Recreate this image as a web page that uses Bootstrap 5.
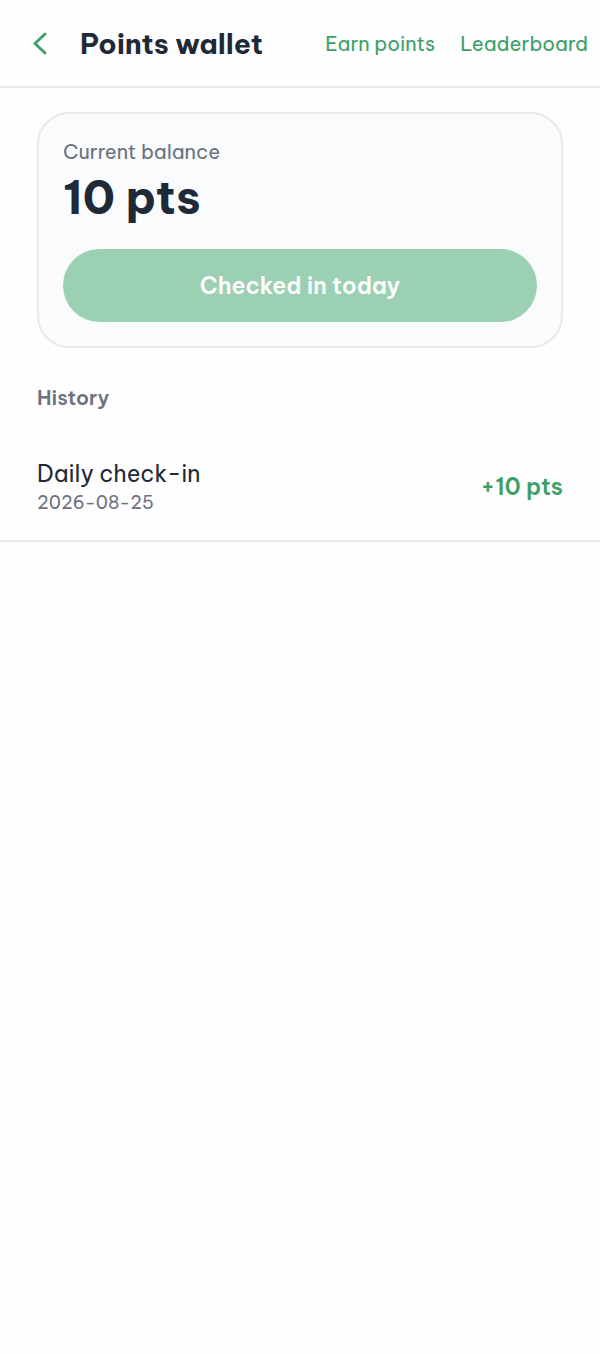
<!DOCTYPE html>
<html lang="en">
<head>
<meta charset="utf-8">
<meta name="viewport" content="width=device-width, initial-scale=1">
<title>Points wallet</title>
<link rel="stylesheet" href="https://cdn.jsdelivr.net/npm/bootstrap@5.3.0/dist/css/bootstrap.min.css">
<style>
body { font-family: "Be Vietnam Pro", Inter, "Liberation Sans", sans-serif; color: #1f2937; background: #fefefe; }
.rule { border-bottom: 2px solid #e8e9eb; }
.topbar { padding: 26px 12px 24px 32px; }
.back { width: 16px; margin-right: 32px; color: #3da06a; }
.title { font-size: 28px; line-height: 36px; font-weight: 700; }
.nav-text { font-size: 20px; line-height: 28px; color: #3da06a; }
.links { gap: 25px; }
.wallet { padding: 24px 37px 0; }
.balance { padding: 24px; border: 2px solid #e8e9eb; border-radius: 32px; background: #f9fbfd; }
.muted { font-size: 20px; line-height: 28px; color: #6b7280; }
.amount { font-size: 46px; line-height: 56px; font-weight: 700; margin: 3px 0 24px; }
.checkin, .checkin:disabled { height: 73px; padding: 8px 12px 6px; font-size: 23px; font-weight: 600; color: #fff; background: #9bd0b3; border: 0; opacity: 1; }
.history { font-size: 20px; line-height: 28px; font-weight: 600; color: #6b7280; padding: 36px 37px 24px; }
.entry { padding: 22px 37px 24px; }
.entry-name { font-size: 23px; line-height: 32px; }
.entry-date { font-size: 18px; line-height: 26px; color: #6b7280; }
.earned { font-size: 23px; line-height: 32px; font-weight: 600; color: #3da06a; }
</style>
</head>
<body>
<header class="topbar rule d-flex align-items-center">
  <a href="#" class="back d-flex" aria-label="Back"><svg width="16" height="26" viewBox="0 0 16 26" fill="none" stroke="currentColor" stroke-width="3" stroke-linecap="round" stroke-linejoin="round"><path d="M13 3 3 12.500l10 9.500"/></svg></a>
  <h1 class="title mb-0 text-nowrap">Points wallet</h1>
  <nav class="links d-flex ms-auto">
    <a href="#" class="nav-text text-decoration-none text-nowrap">Earn points</a>
    <a href="#" class="nav-text text-decoration-none text-nowrap">Leaderboard</a>
  </nav>
</header>
<main>
  <section class="wallet">
    <div class="balance">
      <div class="muted">Current balance</div>
      <div class="amount">10 pts</div>
      <button type="button" class="checkin btn rounded-pill w-100" disabled>Checked in today</button>
    </div>
  </section>
  <h2 class="history mb-0">History</h2>
  <ul class="list-unstyled mb-0">
    <li class="entry rule d-flex align-items-center justify-content-between">
      <div>
        <div class="entry-name">Daily check-in</div>
        <time class="entry-date d-block" datetime="2026-08-25">2026-08-25</time>
      </div>
      <span class="earned">+10 pts</span>
    </li>
  </ul>
</main>
<script src="https://cdn.jsdelivr.net/npm/bootstrap@5.3.0/dist/js/bootstrap.bundle.min.js"></script>
</body>
</html>
